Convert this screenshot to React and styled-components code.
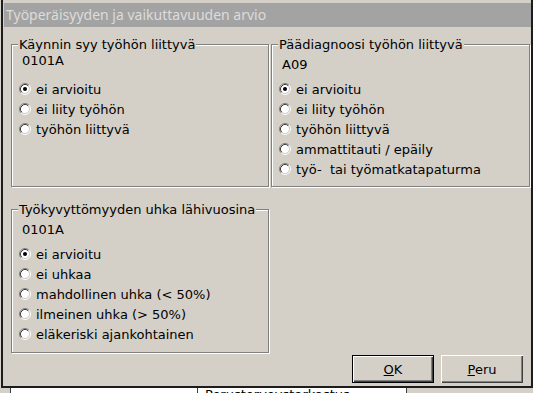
import React from 'react';
import styled, { createGlobalStyle, css } from 'styled-components';

const GlobalStyle = createGlobalStyle`
  html, body { margin: 0; padding: 0; background: #ffffff; }
  body { font-family: "DejaVu Sans", Verdana, sans-serif; }
`;

const Screen = styled.div`
  width: 535px;
  height: 393px;
  overflow: hidden;
  background: #ffffff;
  display: flex;
  flex-direction: column;
`;

const Window = styled.div`
  width: 533px;
  box-sizing: border-box;
  padding-left: 1px;
  background: #d8d4cc;
`;

const Frame = styled.div`
  box-sizing: border-box;
  border-left: 2px solid #1c1c1c;
  border-right: 2px solid #1c1c1c;
  border-bottom: 2px solid #1c1c1c;
  background: #d4d0c8;
  padding-top: 3px;
  display: flex;
  flex-direction: column;
`;

const TitleBar = styled.div`
  height: 24px;
  margin-left: 1px;
  background: #a3a3a3;
  color: #dcdcdc;
  font-family: "Noto Sans", "DejaVu Sans", sans-serif;
  font-size: 14px;
  line-height: 24px;
  padding-left: 2px;
  white-space: nowrap;
`;

const Body = styled.div`
  box-sizing: border-box;
  height: 359px;
  padding: 17px 1px 3px 8px;
  display: flex;
  flex-direction: column;
  font-size: 13px;
  color: #000;
`;

const Row = styled.div`
  display: flex;
  gap: 2px;
  margin-top: ${p => p.$mt || 0}px;
`;

const Group = styled.div`
  position: relative;
  box-sizing: border-box;
  width: ${p => p.$w}px;
  height: ${p => p.$h}px;
  border: 1px solid #808080;
  box-shadow: inset 1px 1px 0 #ffffff, 1px 1px 0 #ffffff;
  padding-top: ${p => p.$pt}px;
`;

const Legend = styled.div`
  position: absolute;
  top: -8px;
  left: 6px;
  padding: 0 1px;
  background: #d4d0c8;
  line-height: 15px;
  white-space: nowrap;
`;

const Code = styled.div`
  line-height: 16px;
  padding-left: 10px;
  margin-bottom: ${p => p.$mb}px;
`;

const RadioList = styled.div`
  display: flex;
  flex-direction: column;
`;

const RadioRow = styled.label`
  display: flex;
  align-items: center;
  height: 20px;
  padding-left: 7px;
  gap: 5px;
  white-space: nowrap;
`;

const RadioMark = styled.svg`
  width: 12px;
  height: 12px;
  flex: none;
`;

const Radio = ({ checked }) => (
  <RadioMark viewBox="0 0 12 12">
    <circle cx="6" cy="6" r="4.2" fill="#ffffff" />
    <path d="M2.11 9.89 A5.5 5.5 0 0 1 9.89 2.11" fill="none" stroke="#808080" strokeWidth="1" />
    <path d="M9.89 2.11 A5.5 5.5 0 0 1 2.11 9.89" fill="none" stroke="#ffffff" strokeWidth="1" />
    <path d="M2.82 9.18 A4.5 4.5 0 0 1 9.18 2.82" fill="none" stroke="#404040" strokeWidth="1" />
    <path d="M9.18 2.82 A4.5 4.5 0 0 1 2.82 9.18" fill="none" stroke="#d4d0c8" strokeWidth="1" />
    {checked && <circle cx="6" cy="6" r="2" fill="#000000" />}
  </RadioMark>
);

const ButtonRow = styled.div`
  display: flex;
  justify-content: flex-end;
  gap: 7px;
  padding-right: 7px;
  margin-top: 2px;
`;

const Button = styled.button`
  box-sizing: border-box;
  width: 82px;
  height: 28px;
  padding: 0;
  background: #d4d0c8;
  color: #000;
  font-family: "DejaVu Sans", Verdana, sans-serif;
  font-size: 13px;
  border: none;
  box-shadow: inset 1px 1px 0 #ffffff, inset -1px -1px 0 #404040, inset -2px -2px 0 #808080;
  ${p => p.$default && css`
    border: 1px solid #000000;
  `}
`;

const Key = styled.span`
  text-decoration: underline;
`;

const Behind = styled.div`
  flex: 1;
  width: 533px;
  display: flex;
  background: #d4d0c8;
  overflow: hidden;
`;

const BehindPanel = styled.div`
  margin-left: 10px;
  width: 395px;
  background: #ffffff;
  border-left: 1px solid #404040;
  border-right: 1px solid #404040;
  display: flex;
`;

const BehindCell = styled.div`
  width: ${p => p.$w}px;
  border-right: ${p => (p.$divider ? '1px solid #404040' : 'none')};
  padding-left: ${p => p.$pl || 0}px;
  font-size: 13px;
  line-height: 15px;
  margin-top: -1px;
  white-space: nowrap;
  color: #000;
`;

const groups = {
  cause: {
    title: 'Käynnin syy työhön liittyvä',
    code: '0101A',
    options: ['ei arvioitu', 'ei liity työhön', 'työhön liittyvä'],
  },
  diagnosis: {
    title: 'Päädiagnoosi työhön liittyvä',
    code: 'A09',
    options: ['ei arvioitu', 'ei liity työhön', 'työhön liittyvä', 'ammattitauti / epäily', 'työ-  tai työmatkatapaturma'],
  },
  threat: {
    title: 'Työkyvyttömyyden uhka lähivuosina',
    code: '0101A',
    options: ['ei arvioitu', 'ei uhkaa', 'mahdollinen uhka (< 50%)', 'ilmeinen uhka (> 50%)', 'eläkeriski ajankohtainen'],
  },
};

const GroupBox = ({ data, w, h, pt, mb }) => (
  <Group $w={w} $h={h} $pt={pt}>
    <Legend>{data.title}</Legend>
    <Code $mb={mb}>{data.code}</Code>
    <RadioList>
      {data.options.map((o, i) => (
        <RadioRow key={o}>
          <Radio checked={i === 0} />
          <span style={{ whiteSpace: 'pre' }}>{o}</span>
        </RadioRow>
      ))}
    </RadioList>
  </Group>
);

export default function App() {
  return (
    <>
      <GlobalStyle />
      <Screen>
        <Window>
          <Frame>
            <TitleBar>Työperäisyyden ja vaikuttavuuden arvio</TitleBar>
            <Body>
              <Row>
                <GroupBox data={groups.cause} w={258} h={143} pt={8} mb={10} />
                <GroupBox data={groups.diagnosis} w={259} h={143} pt={12} mb={6} />
              </Row>
              <Row $mt={22}>
                <GroupBox data={groups.threat} w={258} h={144} pt={12} mb={6} />
              </Row>
              <ButtonRow>
                <Button $default><Key>O</Key>K</Button>
                <Button><Key>P</Key>eru</Button>
              </ButtonRow>
            </Body>
          </Frame>
        </Window>
        <Behind>
          <BehindPanel>
            <BehindCell $w={186} $divider />
            <BehindCell $w={200} $pl={7}>Perusterveystarkastus</BehindCell>
          </BehindPanel>
        </Behind>
      </Screen>
    </>
  );
}
